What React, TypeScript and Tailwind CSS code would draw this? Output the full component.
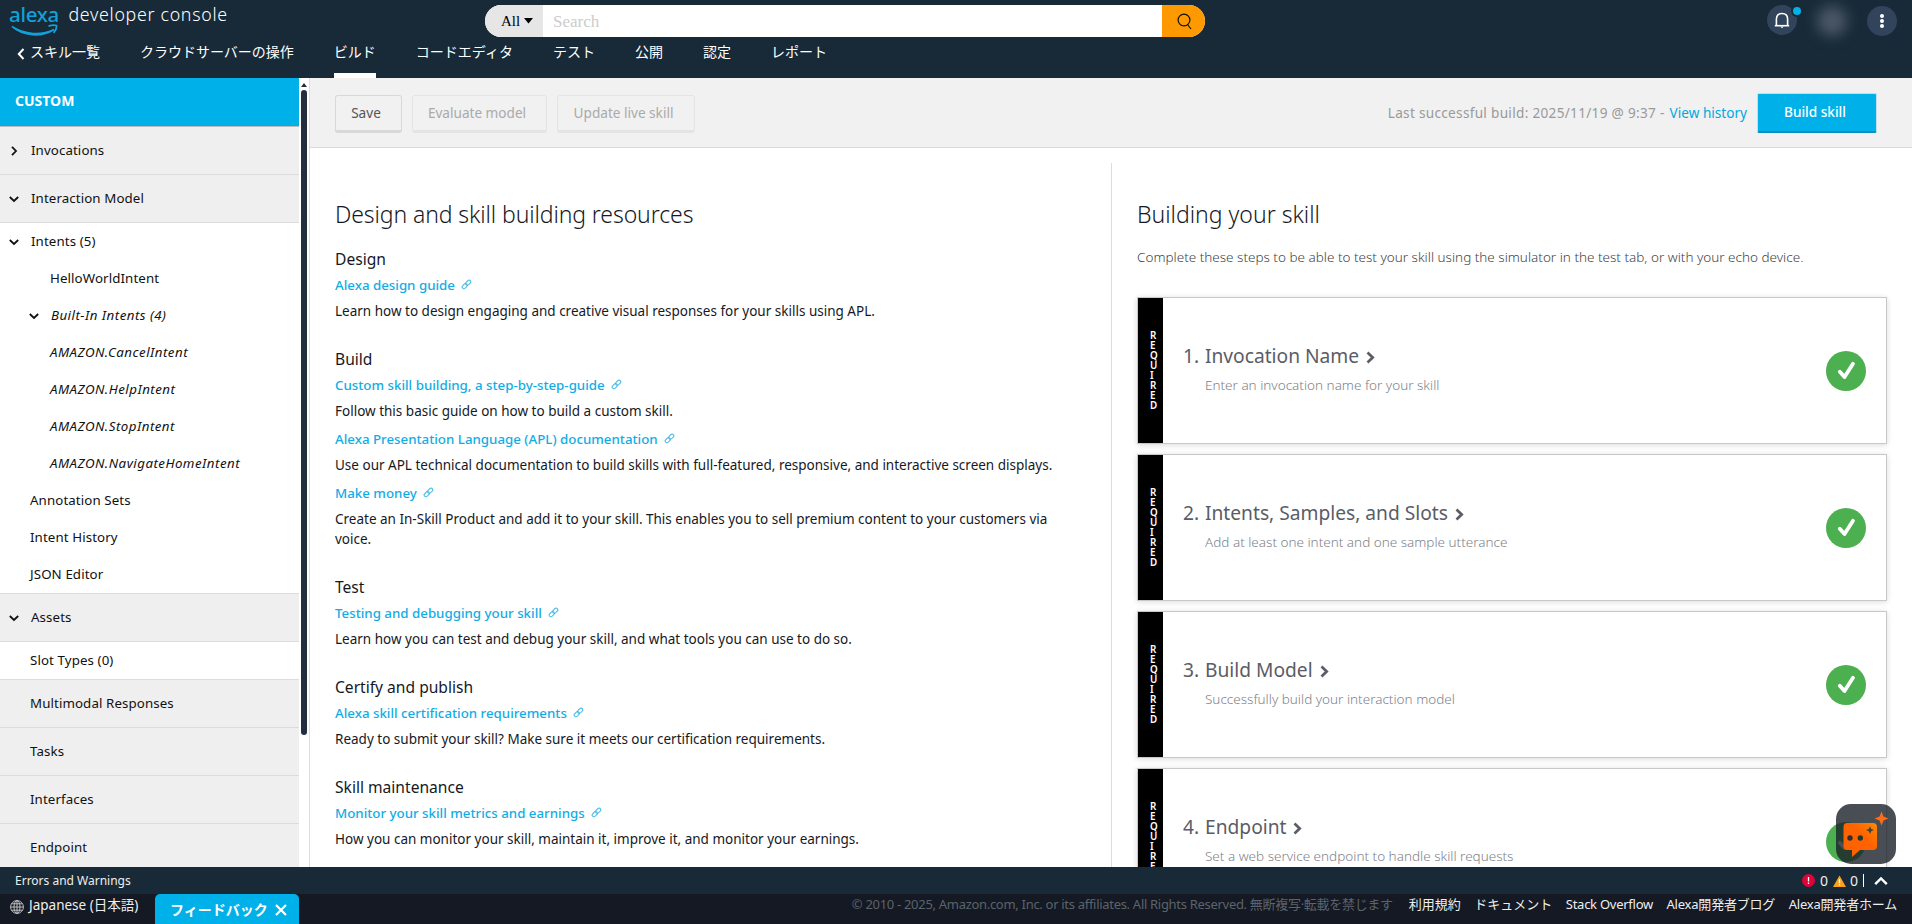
import React from 'react';

interface NavRow {
  label: string;
  level?: 'section' | 'item' | 'child';
  arrow?: 'down' | 'right';
  italic?: boolean;
  border?: boolean;
}

interface Resource {
  title: string;
  body: string;
}

const tabs = ['クラウドサーバーの操作', 'ビルド', 'コードエディタ', 'テスト', '公開', '認定', 'レポート'];

const navRows: NavRow[] = [
  { label: 'Invocations', level: 'section', arrow: 'right' },
  { label: 'Interaction Model', level: 'section', arrow: 'down' },
  { label: 'Intents (5)', arrow: 'down' },
  { label: 'HelloWorldIntent', level: 'child' },
  { label: 'Built-In Intents (4)', level: 'child', arrow: 'down', italic: true },
  { label: 'AMAZON.CancelIntent', level: 'child', italic: true },
  { label: 'AMAZON.HelpIntent', level: 'child', italic: true },
  { label: 'AMAZON.StopIntent', level: 'child', italic: true },
  { label: 'AMAZON.NavigateHomeIntent', level: 'child', italic: true },
  { label: 'Annotation Sets' },
  { label: 'Intent History' },
  { label: 'JSON Editor' },
  { label: 'Assets', level: 'section', arrow: 'down', border: true },
  { label: 'Slot Types (0)' },
  { label: 'Multimodal Responses', level: 'section', border: true },
  { label: 'Tasks', level: 'section' },
  { label: 'Interfaces', level: 'section' },
  { label: 'Endpoint', level: 'section' },
];

const resources: { heading: string; items: Resource[] }[] = [
  {
    heading: 'Design',
    items: [
      {
        title: 'Alexa design guide',
        body: 'Learn how to design engaging and creative visual responses for your skills using APL.',
      },
    ],
  },
  {
    heading: 'Build',
    items: [
      {
        title: 'Custom skill building, a step-by-step-guide',
        body: 'Follow this basic guide on how to build a custom skill.',
      },
      {
        title: 'Alexa Presentation Language (APL) documentation',
        body: 'Use our APL technical documentation to build skills with full-featured, responsive, and interactive screen displays.',
      },
      {
        title: 'Make money',
        body: 'Create an In-Skill Product and add it to your skill. This enables you to sell premium content to your customers via voice.',
      },
    ],
  },
  {
    heading: 'Test',
    items: [
      {
        title: 'Testing and debugging your skill',
        body: 'Learn how you can test and debug your skill, and what tools you can use to do so.',
      },
    ],
  },
  {
    heading: 'Certify and publish',
    items: [
      {
        title: 'Alexa skill certification requirements',
        body: 'Ready to submit your skill? Make sure it meets our certification requirements.',
      },
    ],
  },
  {
    heading: 'Skill maintenance',
    items: [
      {
        title: 'Monitor your skill metrics and earnings',
        body: 'How you can monitor your skill, maintain it, improve it, and monitor your earnings.',
      },
    ],
  },
];

const steps = [
  { title: 'Invocation Name', body: 'Enter an invocation name for your skill' },
  { title: 'Intents, Samples, and Slots', body: 'Add at least one intent and one sample utterance' },
  { title: 'Build Model', body: 'Successfully build your interaction model' },
  { title: 'Endpoint', body: 'Set a web service endpoint to handle skill requests' },
];

const Arrow = ({ dir }: { dir: 'down' | 'right' }) => (
  <svg width="10" height="10" viewBox="0 0 10 10" fill="none" stroke="currentColor" strokeWidth="1.8">
    {dir === 'down' ? <path d="M0.8 3 L5 7 L9.2 3" /> : <path d="M3 0.8 L7 5 L3 9.2" />}
  </svg>
);

const LinkIcon = () => (
  <svg className="-mt-[3px]" width="11" height="11" viewBox="0 0 11 11" fill="none" stroke="#3fb8e6" strokeWidth="1">
    <rect x="-2.9" y="-1.75" width="5.8" height="3.5" rx="1.75" transform="translate(3.7 7.2) rotate(-45)" />
    <rect x="-2.9" y="-1.75" width="5.8" height="3.5" rx="1.75" transform="translate(7.2 3.7) rotate(-45)" />
  </svg>
);

const Header = () => (
  <header className="flex h-[78px] shrink-0 flex-col bg-[#182a37] text-white">
    <div className="flex h-[38px] items-start">
      <div className="flex w-[485px] items-start pl-[9px]">
        <div className="flex w-[59.5px] flex-col text-[#12a0d7]">
          <span className="text-[20.5px] font-medium leading-[28px] tracking-[-0.3px]">alexa</span>
          <svg className="-mt-[4px] ml-px" width="50" height="13" viewBox="0 0 50 13" fill="none" stroke="currentColor">
            <path d="M2 2.5 C14 11 32 11.5 44 5.5 C32 13.5 13 12.5 2 2.5 Z" fill="currentColor" strokeWidth="1.6" />
            <path d="M38.5 2.2 C42 1 45 1 46.5 1.6 C46.8 4 45.8 6.5 43.6 8.8" strokeWidth="1.8" />
          </svg>
        </div>
        <span className="text-[17.8px] font-light leading-[28px] tracking-[0.7px]">developer console</span>
      </div>
      <div className="mt-[5px] flex h-8 w-[720px] overflow-hidden rounded-[16px] bg-white font-['Liberation_Serif','Noto_Sans_CJK_JP',serif]">
        <div className="flex w-[58px] items-center bg-[#e6e6e6] pl-[16px] text-[15px] text-black">
          All
          <svg className="ml-[4px]" width="9" height="6" viewBox="0 0 9 6">
            <path d="M0 0 H9 L4.5 5.5 Z" />
          </svg>
        </div>
        <div className="flex flex-1 items-center pl-[10px] pt-px text-[17px] text-[#ccc]">Search</div>
        <div className="flex w-[43px] items-center justify-center bg-[#ff9900]">
          <svg width="16" height="17" viewBox="0 0 16 17" fill="none" stroke="#111" strokeWidth="1.2">
            <circle cx="8" cy="7" r="5.9" />
            <path d="M11.5 11.5 L15 16" />
          </svg>
        </div>
      </div>
      <div className="ml-auto flex items-start pr-[15px] pt-[5px]">
        <div className="relative flex size-[30px] items-center justify-center rounded-full bg-[#32435c]">
          <svg width="16" height="17" viewBox="0 0 16 17" fill="none" stroke="white" strokeWidth="1.6">
            <path d="M2.4 13.5 V7 C2.4 3.4 4.6 1.5 8 1.5 C11.4 1.5 13.6 3.4 13.6 7 V13.5" />
            <path d="M0.8 13.7 H15.2" />
            <path d="M6.3 14.5 H9.7 L8 16.3 Z" fill="white" stroke="none" />
          </svg>
          <span className="absolute -right-[4px] top-[2px] size-2 rounded-full bg-[#00b0e9] ring-2 ring-[#182a37]" />
        </div>
        <div className="ml-[20px] mt-[1px] size-[30px] rounded-full bg-[#4c5868] blur-[7px]" />
        <div className="ml-[20px] mt-[1px] flex size-[30px] flex-col items-center justify-center gap-px rounded-full bg-[#32435c]">
          <span className="size-1 rounded-full bg-white" />
          <span className="size-1 rounded-full bg-white" />
          <span className="size-1 rounded-full bg-white" />
        </div>
      </div>
    </div>
    <nav className="flex h-[40px] text-[14px] leading-[28px]">
      <a className="flex w-[140px] items-start pl-[17px]">
        <svg className="mr-[5px] mt-[10px]" width="8" height="12" viewBox="0 0 8 12" fill="none" stroke="white" strokeWidth="2">
          <path d="M6.5 1 L1.8 6 L6.5 11" />
        </svg>
        スキル一覧
      </a>
      <div className="flex gap-[40px]">
        {tabs.map((tab) => (
          <a key={tab} className={tab === 'ビルド' ? 'border-b-[5px] border-white' : ''}>
            {tab}
          </a>
        ))}
      </div>
    </nav>
  </header>
);

const SidebarRow = ({ row }: { row: NavRow }) => {
  const section = row.level === 'section';
  const child = row.level === 'child';
  return (
    <div
      className={`flex shrink-0 items-center ${
        section ? `border-b border-[#dcdcdc] bg-[#efefef] ${row.border ? 'h-[49px] border-t' : 'h-[48px]'}` : 'h-[37px]'
      } ${child ? 'pl-[29px]' : 'pl-[9px]'}`}
    >
      <span className={row.arrow ? 'w-[22px]' : 'w-[21px]'}>{row.arrow && <Arrow dir={row.arrow} />}</span>
      <span className={row.italic ? 'italic tracking-[0.47px]' : 'tracking-[0.1px]'}>{row.label}</span>
    </div>
  );
};

const Sidebar = () => (
  <aside className="flex w-[309px] shrink-0 bg-white">
    <div className="flex w-[299px] flex-col overflow-hidden text-[13.3px] text-[#111]">
      <div className="flex h-[49px] shrink-0 items-center border-b border-[#bbb] bg-[#00b0e9] pb-[3px] pl-[15px] text-[14px] font-bold text-white">
        CUSTOM
      </div>
      {navRows.map((row) => (
        <SidebarRow key={row.label} row={row} />
      ))}
    </div>
    <div className="flex flex-1 flex-col items-center pt-[5px]">
      <svg width="6" height="4" viewBox="0 0 6 4">
        <path d="M0 4 L3 0 L6 4 Z" fill="#232f3e" />
      </svg>
      <div className="mt-[3px] h-[645px] w-[6px] rounded-full bg-[#232f3e]" />
    </div>
  </aside>
);

const Toolbar = () => (
  <div className="flex h-[70px] shrink-0 items-start border-b border-[#d9d9d9] bg-[#f1f1f1] pl-[25px] pt-[15px] text-[13.6px]">
    <button className="mt-[2px] h-[38px] w-[67px] rounded-[3px] border border-b-[3px] border-[#d8d8d8] pr-[5px] pt-px text-[#555]">
      Save
    </button>
    <button className="ml-[10px] mt-[2px] h-[38px] w-[135px] rounded-[3px] border border-b-[3px] border-[#e4e4e4] pr-[5px] pt-px text-[#aaa]">
      Evaluate model
    </button>
    <button className="ml-[10px] mt-[2px] h-[38px] w-[138px] rounded-[3px] border border-b-[3px] border-[#e4e4e4] pr-[5px] pt-px text-[#aaa]">
      Update live skill
    </button>
    <div className="ml-auto flex h-[40px] items-center">
      <span className="pt-px tracking-[0.3px] text-[#999]">Last successful build: 2025/11/19 @ 9:37 -</span>
      <a className="ml-[5px] text-[#00a8e1]">View history</a>
      <button className="ml-[10px] mr-[35px] h-[40px] w-[120px] rounded-[2px] border border-b-2 border-[#c5dfe8] border-b-[#0092c2] bg-[#00b0e9] pr-[4px] font-medium text-white">
        Build skill
      </button>
    </div>
  </div>
);

const Resources = () => (
  <div className="w-[801px] shrink-0 pl-[25px] pt-[48px] text-[#16191f]">
    <h1 className="h-[51px] text-[23px] font-light leading-[36px] tracking-[-0.1px]">Design and skill building resources</h1>
    {resources.map((group) => (
      <section key={group.heading} className="pb-[20px]">
        <h2 className="mb-px text-[15.6px] leading-[25px]">{group.heading}</h2>
        {group.items.map((item) => (
          <div key={item.title} className="mb-[6px] text-[13.5px]">
            <a className="mb-[3px] flex h-[25px] items-center gap-[6px] text-[13.3px] font-medium text-[#10ade5]">
              {item.title}
              <LinkIcon />
            </a>
            <p className="w-[735px] leading-[20px]">{item.body}</p>
          </div>
        ))}
      </section>
    ))}
  </div>
);

const StepCard = ({ index, title, body }: { index: number; title: string; body: string }) => (
  <div className="flex h-[147px] shrink-0 border border-[#c8c8c8] bg-white shadow-[0_1px_6px_rgba(0,0,0,0.15)]">
    <div className="flex w-[25px] flex-col items-start justify-center bg-black pl-[12px] text-[9.8px] font-semibold leading-[10px] text-white">
      {'REQUIRED'.split('').map((letter, i) => (
        <span key={i}>{letter}</span>
      ))}
    </div>
    <div className="flex flex-1 flex-col pl-[20px] pt-[42px]">
      <div className="flex items-center text-[19.2px] leading-[32px] text-[#5a5c66]">
        <span className="w-[22px]">{index}.</span>
        {title}
        <svg className="ml-[7px] mt-[2px]" width="9" height="13" viewBox="0 0 9 13" fill="none" stroke="currentColor" strokeWidth="2.7">
          <path d="M1.5 1.5 L6.7 6.5 L1.5 11.5" />
        </svg>
      </div>
      <p className="pl-[22px] text-[13.5px] font-light leading-[26px] text-[#808289]">{body}</p>
    </div>
    <svg className="mr-[20px] self-center" width="40" height="40" viewBox="0 0 40 40">
      <circle cx="20" cy="20" r="20" fill="#4caf50" />
      <path d="M13.8 20.7 L18.5 26 L27 12.8" fill="none" stroke="white" strokeWidth="3.8" strokeLinecap="round" strokeLinejoin="round" />
    </svg>
  </div>
);

const Steps = () => (
  <div className="mt-[15px] flex flex-1 flex-col border-l border-[#ddd] px-[25px] pt-[33px]">
    <h1 className="h-[49px] shrink-0 text-[23px] font-light leading-[36px] text-[#16191f]">Building your skill</h1>
    <p className="h-[52px] shrink-0 text-[13.5px] font-light leading-[24px] text-[#444]">
      Complete these steps to be able to test your skill using the simulator in the test tab, or with your echo device.
    </p>
    <div className="flex flex-col gap-[10px]">
      {steps.map((step, i) => (
        <StepCard key={step.title} index={i + 1} {...step} />
      ))}
    </div>
  </div>
);

const StatusBar = () => (
  <div className="flex h-[27px] shrink-0 items-center bg-[#182a37] pl-[15px] pr-[24px] text-[12px] text-[#eee]">
    <span>Errors and Warnings</span>
    <div className="ml-auto flex items-center">
      <svg width="13" height="13" viewBox="0 0 13 13">
        <circle cx="6.5" cy="6.5" r="6.5" fill="#d9063c" />
        <path d="M6.5 3 V7.4 M6.5 8.6 V10" stroke="white" strokeWidth="1.3" />
      </svg>
      <span className="ml-[5px] text-[14px]">0</span>
      <svg className="ml-[5px]" width="13" height="12" viewBox="0 0 13 12">
        <path d="M6.5 0.5 L13 12 H0 Z" fill="#f9a11b" />
        <path d="M6.5 4.2 V8.2 M6.5 9.3 V10.6" stroke="white" strokeWidth="1.3" />
      </svg>
      <span className="ml-[4px] text-[14px]">0</span>
      <span className="ml-[5px] h-[13px] w-px bg-white" />
      <svg className="ml-[10px]" width="14" height="10" viewBox="0 0 14 10" fill="none" stroke="white" strokeWidth="2.4">
        <path d="M1.2 8.2 L7 2.4 L12.8 8.2" />
      </svg>
    </div>
  </div>
);

const Footer = () => (
  <footer className="flex h-[30px] shrink-0 bg-[#141923] pr-[15px] text-[13px] leading-[22px] text-[#eee]">
    <div className="flex w-[155px] pl-[10px] text-[13.5px]">
      <svg className="mr-[5px] mt-[6px]" width="14" height="14" viewBox="0 0 14 14" fill="none" stroke="#ccc" strokeWidth="0.9">
        <circle cx="7" cy="7" r="6.4" />
        <ellipse cx="7" cy="7" rx="3" ry="6.4" />
        <path d="M7 0.6 V13.4 M0.6 7 H13.4 M1.5 3.8 H12.5 M1.5 10.2 H12.5" />
      </svg>
      Japanese (日本語)
    </div>
    <button className="flex h-[30px] w-[144px] items-center rounded-t-[5px] bg-[#00b0e9] pl-[15px] pt-[2px] text-[14px] font-bold text-white">
      フィードバック
      <svg className="ml-[7px]" width="12" height="12" viewBox="0 0 12 12" fill="none" stroke="white" strokeWidth="2.2">
        <path d="M1 1 L11 11 M11 1 L1 11" />
      </svg>
    </button>
    <div className="-mt-px ml-auto flex">
      <span className="mr-[16px] tracking-[-0.3px] text-[#5c636c]">
        © 2010 - 2025, Amazon.com, Inc. or its affiliates. All Rights Reserved. 無断複写·転載を禁じます
      </span>
      <div className="flex gap-[13.5px]">
        <a>利用規約</a>
        <a>ドキュメント</a>
        <a className="tracking-[-0.26px]">Stack Overflow</a>
        <a className="tracking-[-0.2px]">Alexa開発者ブログ</a>
        <a className="tracking-[-0.2px]">Alexa開発者ホーム</a>
      </div>
    </div>
  </footer>
);

const ChatButton = () => (
  <button className="absolute bottom-[60px] right-[16px] size-[60px] rounded-[15px] bg-[#1c2029]/80">
    <svg width="60" height="60" viewBox="0 0 60 60">
      <defs>
        <linearGradient id="bubble" x1="0" y1="1" x2="1" y2="0">
          <stop offset="0.6" stopColor="#ff6200" />
          <stop offset="1" stopColor="#ff8a00" />
        </linearGradient>
      </defs>
      <path
        d="M11 19 H37 Q41 19 41 23 V42 Q41 46 37 46 H24 L16 53 V46 H11 Q7.5 46 7.5 42 V23 Q7.5 19 11 19 Z"
        fill="url(#bubble)"
      />
      <circle cx="14" cy="34" r="2.7" fill="#2b3038" />
      <circle cx="24.3" cy="34" r="2.7" fill="#1f3a2c" />
      <path d="M34 22.3 L35.2 25 L38 26 L35.2 27.2 L34 30 L32.8 27.2 L30 26 L32.8 25 Z" fill="#3c414a" />
      <path d="M45.5 7.5 L47.5 12.5 L52.5 14.5 L47.5 16.5 L45.5 21.5 L43.5 16.5 L38.5 14.5 L43.5 12.5 Z" fill="#ff6a13" />
    </svg>
  </button>
);

export default function App() {
  return (
    <div className="relative flex h-[924px] w-[1912px] flex-col overflow-hidden bg-white font-['Noto_Sans','Noto_Sans_CJK_JP',sans-serif]">
      <Header />
      <div className="flex h-[789px] shrink-0 overflow-hidden">
        <Sidebar />
        <main className="flex flex-1 flex-col border-l border-[#ddd]">
          <Toolbar />
          <div className="flex min-h-0 flex-1 overflow-hidden">
            <Resources />
            <Steps />
          </div>
        </main>
      </div>
      <StatusBar />
      <Footer />
      <ChatButton />
    </div>
  );
}
